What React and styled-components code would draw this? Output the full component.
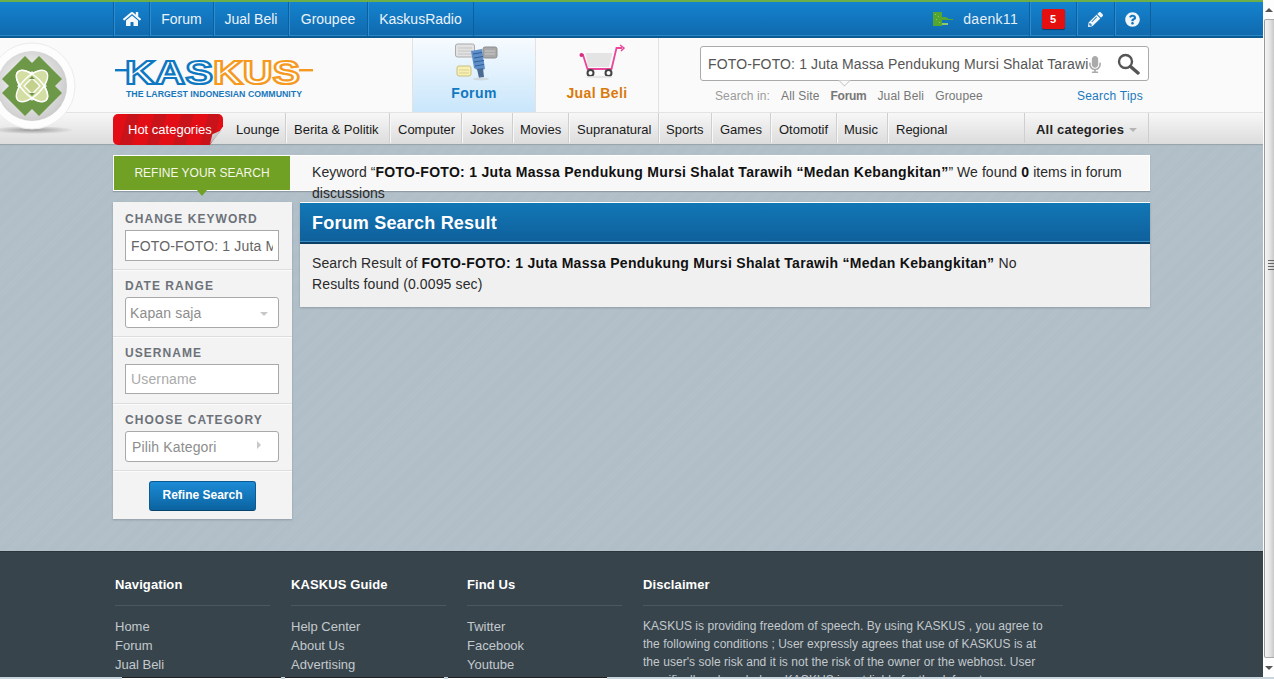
import React from "react";
import styled, { createGlobalStyle } from "styled-components";
import { FaHome, FaPencilAlt, FaQuestionCircle, FaMicrophone } from "react-icons/fa";

const Global = createGlobalStyle`
  html, body { margin: 0; padding: 0; height: 679px; overflow: hidden; }
  body { font-family: "Liberation Sans", Arial, sans-serif; background: #fff; }
  * { box-sizing: border-box; }
`;

const Frame = styled.div`
  width: 1274px; height: 679px; display: flex; flex-direction: column; overflow: hidden;
`;
const Window = styled.div`
  flex: 1; min-height: 0; display: flex;
`;
const Page = styled.div`
  position: relative; flex: 1; min-width: 0; height: 100%; overflow: hidden; display: flex; flex-direction: column;
`;
const Scrollbar = styled.div`
  width: 11px; flex: none; background: #fdfdfd; border-left: 1px solid #fff; display: flex; flex-direction: column; align-items: stretch;
  position: relative;
`;
const ArrowBtn = styled.div`
  height: 19px; display: flex; align-items: center; justify-content: center;
  &::before {
    content: ""; width: 0; height: 0; border-left: 4px solid transparent; border-right: 4px solid transparent;
    ${p => p.$down ? "border-top: 4px solid #555;" : "border-bottom: 4px solid #555;"}
  }
`;
const Thumb = styled.div`
  flex: 1; border-left: 1px solid #9a9a9a; border-top: 1px solid #aaa; border-bottom: 1px solid #aaa; border-radius: 2px 0 0 2px;
  background: linear-gradient(90deg, #f4f4f4 0%, #e8e8e8 45%, #c9c9c9 100%);
  display: flex; flex-direction: column; align-items: center; justify-content: center; gap: 2px; padding-left: 1px;
  padding-bottom: 148px;
`;
const Grip = styled.span`
  display: block; width: 7px; height: 1px; background: #666; margin-left: 2px;
`;
const TaskStrip = styled.div`
  height: 2px; flex: none; display: flex; background: #c9d6de; padding-left: 122px; gap: 4px;
`;
const TaskTab = styled.div`
  width: 159px; height: 2px; background: #fff; border-top: 1px solid #222;
`;

const GreenLine = styled.div`
  height: 2px; flex: none; background: #6cae48;
`;
const TopBar = styled.div`
  height: 36px; flex: none; background: linear-gradient(#1483cf, #1069ad); border-bottom: 2px solid #0c5a92; box-shadow: inset 0 -1px 0 #2a87c8;
  padding-left: 113px; display: flex;
`;
const TopInner = styled.div`
  width: 1038px; display: flex; justify-content: space-between; height: 34px;
`;
const TopGroup = styled.div`
  display: flex; height: 34px;
`;
const TopItem = styled.div`
  width: ${p => p.$w}px; height: 100%; border-left: 1px solid #0d5f9e; box-shadow: inset 1px 0 0 #2a8ed5;
  display: flex; align-items: center; justify-content: center; color: #eaf3fa; font-size: 14px;
  ${p => p.$end && "border-right: 1px solid #0d5f9e;"}
`;
const UserBlock = styled.div`
  display: flex; align-items: center; gap: 10px; color: #e4eff8; font-size: 14px; padding-right: 11px; letter-spacing: .3px;
`;
const Badge = styled.div`
  width: 23px; height: 20px; background: #e60f10; border-radius: 2px; box-shadow: 0 1px 1px #0a3d66; color: #fff; font-size: 11px; font-weight: bold;
  display: flex; align-items: center; justify-content: center;
`;

const Header = styled.div`
  height: 75px; flex: none; background: #fafafa; border-bottom: 1px solid #e3e3e3; padding-left: 113px; display: flex;
`;
const LogoBox = styled.div`
  width: 300px; flex: none; padding: 19px 0 0 2px; border-right: 1px solid #e2e2e2;
`;
const Tab = styled.div`
  width: ${p => p.$w}px; flex: none; height: 74px; display: flex; flex-direction: column; align-items: center; padding-top: 5px;
  border-right: 1px solid #e2e2e2; font-size: 14px; font-weight: bold; letter-spacing: .4px;
  color: ${p => p.$active ? "#1278bf" : "#d97a0c"};
  background: ${p => p.$active ? "linear-gradient(#f7fbff, #c9e6fb)" : "#fafafa"};
`;
const TabIcon = styled.svg`
  width: 50px; height: 38px; margin-bottom: 4px; display: block; overflow: visible;
`;
const SearchArea = styled.div`
  flex: none; width: 449px; margin-left: 41px; padding-top: 8px;
`;
const SearchBox = styled.div`
  position: relative; height: 35px; background: #fff; border: 1px solid #aaa; border-radius: 3px; display: flex; align-items: center; padding: 0 8px 0 7px;
  &::after {
    content: ""; position: absolute; left: 139px; bottom: -5px; width: 8px; height: 8px; background: #fafafa; border-right: 1px solid #bbb; border-bottom: 1px solid #bbb; transform: rotate(45deg);
    clip-path: polygon(100% 0, 100% 100%, 0 100%);
  }
`;
const SearchInput = styled.input`
  flex: none; width: 380px; border: 0; outline: 0; padding: 0; background: transparent; font: 14px "Liberation Sans", Arial, sans-serif; color: #555; letter-spacing: .13px;
`;
const MicWrap = styled.div`
  width: 14px; flex: none; color: #aaa; font-size: 17px; display: flex; justify-content: center; margin-top: 2px;
`;
const SearchIconWrap = styled.div`
  margin-left: auto; display: flex;
`;
const SearchMeta = styled.div`
  display: flex; align-items: center; height: 28px; padding: 0 6px 0 15px; font-size: 12px; color: #7c7c7c; margin-top: 1px;
`;
const MetaLabel = styled.span`
  color: #9a9a9a; margin-right: 11px; letter-spacing: .1px;
`;
const MetaItem = styled.span`
  margin-right: 11px; font-weight: ${p => p.$b ? "bold" : "normal"}; color: #777; letter-spacing: ${p => p.$b ? "-.3px" : ".15px"};
`;
const MetaLink = styled.span`
  margin-left: auto; color: #1b79bd; letter-spacing: .25px;
`;

const CatNav = styled.div`
  height: 31px; flex: none; background: linear-gradient(#f7f7f7, #dcdcdc); padding-left: 113px; display: flex;
  box-shadow: 0 1px 1px #9aa5ac; position: relative;
`;
const Hot = styled.div`
  width: 110px; height: 31px; margin-top: 1px; border-radius: 5px 5px 0 5px; color: #fff; font-size: 13px; display: flex; align-items: center; padding-left: 15px; flex: none;
  background: repeating-linear-gradient(105deg, #e30d15 0 14px, #c9131a 14px 26px);
  clip-path: polygon(0 0, 100% 0, 100% 40%, 88% 100%, 0 100%);
  position: relative; z-index: 2;
`;
const Curl = styled.div`
  width: 12px; height: 14px; margin: 17px 0 0 -13px; z-index: 3; flex: none; background: linear-gradient(135deg, #f2f2f2, #8c8c8c); clip-path: polygon(100% 0, 0 100%, 20% 30%);
`;
const CatItem = styled.div`
  width: ${p => p.$w}px; height: 30px; padding: 2px 0 0 ${p => p.$pad || 8}px; border-right: ${p => p.$plain ? "0" : "1px solid #cfcfcf"}; box-shadow: ${p => p.$plain ? "none" : "1px 0 0 #f8f8f8"}; display: flex; align-items: center; font-size: 13px; color: #1a1a1a; flex: none; white-space: nowrap;
`;
const AllCats = styled.div`
  margin-left: 76px; width: 125px; height: 30px; padding-top: 2px; border-left: 1px solid #cfcfcf; border-right: 1px solid #cfcfcf; display: flex; align-items: center; padding-left: 11px; gap: 5px; font-size: 13px; font-weight: bold; color: #222; flex: none; letter-spacing: .2px;
  &::after { content: ""; width: 0; height: 0; border-left: 4px solid transparent; border-right: 4px solid transparent; border-top: 4px solid #b5b5b5; margin-top: 1px; }
`;

const Body = styled.div`
  height: 407px; flex: none; padding: 11px 0 0 113px;
  background-color: #b1bfc8;
  background-image: repeating-linear-gradient(135deg, rgba(255,255,255,.035) 0 1px, rgba(0,0,0,.012) 1px 2px);
`;
const Container = styled.div`
  width: 1037px;
`;
const RefineBar = styled.div`
  position: relative; height: 36px; background: #f8f8f8; border: 1px solid #fff; box-shadow: 0 1px 1px #8f9ca5; display: flex; margin-bottom: 11px;
`;
const RefineLabel = styled.div`
  position: relative; width: 176px; flex: none; height: 34px; background: #70a024; color: #f4f7ea; font-size: 12px; display: flex; align-items: center; justify-content: center;
  &::after { content: ""; position: absolute; left: 83px; top: 34px; width: 0; height: 0; border-left: 5px solid transparent; border-right: 5px solid transparent; border-top: 6px solid #70a024; }
`;
const KeywordText = styled.div`
  width: 830px; margin-left: 22px; font-size: 14px; line-height: 21px; color: #2a2a2a; height: 42px; padding-top: 6px; flex: none; letter-spacing: .05px;
  b { color: #111; letter-spacing: .3px; }
`;
const Columns = styled.div`
  display: flex; align-items: flex-start; gap: 8px;
`;
const Sidebar = styled.div`
  width: 179px; flex: none; background: #f3f3f3; box-shadow: 0 1px 2px #8f9ca5;
`;
const Section = styled.div`
  height: ${p => p.$h || 67}px; padding: ${p => p.$top || 9}px 13px 0 12px; border-bottom: 1px solid #dedede; box-shadow: 0 1px 0 #fbfbfb;
`;
const Label = styled.div`
  font-size: 12px; font-weight: bold; letter-spacing: 1.05px; color: #6d727a; line-height: 14px; margin-bottom: 4px; white-space: nowrap;
`;
const TextField = styled.input`
  width: 154px; height: ${p => p.$h || 31}px; border: 1px solid #a9a9a9; border-radius: 0; padding: 0 5px; font: 14px "Liberation Sans", Arial, sans-serif; color: #666; background: #fff; outline: 0; letter-spacing: .15px;
  &::placeholder { color: #aaa; opacity: 1; }
`;
const SelectBox = styled.div`
  width: 154px; height: 31px; border: 1px solid #a9a9a9; border-radius: 3px; background: #fff; padding: 0 ${p => p.$side ? 17 : 10}px 0 ${p => p.$side ? 6 : 4}px; display: flex; align-items: center; justify-content: space-between; font-size: 14px; color: #8d8d8d; letter-spacing: .15px;
  &::after {
    content: ""; width: 0; height: 0;
    ${p => p.$side
      ? "border-top: 4px solid transparent; border-bottom: 4px solid transparent; border-left: 4px solid #c8c8c8; margin-top: -4px;"
      : "border-left: 4px solid transparent; border-right: 4px solid transparent; border-top: 4px solid #c8c8c8; margin-top: 3px;"}
  }
`;
const ButtonRow = styled.div`
  height: 48px; padding-top: 10px; display: flex; justify-content: center;
`;
const RefineBtn = styled.div`
  width: 107px; height: 30px; padding-bottom: 2px; border: 1px solid #0c5a92; border-bottom-color: #07436f; border-radius: 3px; background: linear-gradient(#1c8bd6, #0b639f); color: #fff; font-size: 12px; font-weight: bold; display: flex; align-items: center; justify-content: center;
`;
const Result = styled.div`
  width: 850px; flex: none; height: 105px; background: #f0f0f0; box-shadow: 0 1px 2px #8f9ca5; border-top: 1px solid #fff;
`;
const ResultHead = styled.div`
  height: 41px; padding: 2px 0 0 12px; background: linear-gradient(#1277b6, #0f609b); border-bottom: 2px solid #0b3f66; box-shadow: inset 0 -1px 0 #3b8ec5; color: #fff; font-size: 18px; font-weight: bold; letter-spacing: .2px; display: flex; align-items: center;
`;
const ResultBody = styled.div`
  width: 730px; padding: 9px 0 0 12px; font-size: 14px; line-height: 21px; color: #2a2a2a; letter-spacing: .12px;
  b { color: #111; letter-spacing: .3px; }
`;

const Footer = styled.div`
  flex: 1; min-height: 0; overflow: hidden; background: #37444c; border-top: 1px solid #2b353b; padding: 23px 0 0 115px; display: flex; gap: 21px;
`;
const FootCol = styled.div`
  width: ${p => p.$w || 155}px; flex: none;
`;
const FootTitle = styled.div`
  height: 31px; border-bottom: 1px solid #4a5961; font-size: 13px; font-weight: bold; color: #fff; line-height: 20px; margin-bottom: 11px; letter-spacing: .1px;
`;
const FootLink = styled.div`
  font-size: 13px; line-height: 19px; color: #c3c9cd;
`;
const Disclaimer = styled.div`
  font-size: 12px; line-height: 18px; color: #c3c9cd; width: 405px; letter-spacing: .04px;
`;

const RoundLogo = styled.svg`
  position: absolute; left: -14px; top: 42px; width: 96px; height: 104px; z-index: 5;
`;

function KaskusLogo() {
  const font = '"Liberation Sans", Arial, sans-serif';
  return (
    <svg width="198" height="44" viewBox="0 0 198 44" style={{ display: "block" }}>
      <rect x="0" y="12" width="12" height="2.4" fill="#0f78c2" />
      <rect x="184" y="12" width="14" height="2.4" fill="#f59a1f" />
      <text x="10" y="27" fontFamily={font} fontWeight="bold" fontSize="34" fill="#fff" stroke="#0f78c2" strokeWidth="2.2" textLength="88" lengthAdjust="spacingAndGlyphs">KAS</text>
      <text x="98" y="27" fontFamily={font} fontWeight="bold" fontSize="34" fill="#fff" stroke="#f59a1f" strokeWidth="2.2" textLength="87" lengthAdjust="spacingAndGlyphs">KUS</text>
      <text x="11" y="40" fontFamily={font} fontWeight="bold" fontSize="9" fill="#1878bd" textLength="176" lengthAdjust="spacingAndGlyphs">THE LARGEST INDONESIAN COMMUNITY</text>
    </svg>
  );
}

function ForumIcon() {
  return (
    <TabIcon viewBox="0 0 50 38">
      <rect x="6.5" y="1" width="19" height="13" rx="2" fill="#e2e2e2" stroke="#aaa" />
      <path d="M9 5h14M9 8h14M9 11h14" stroke="#c4c4c4" />
      <rect x="34" y="4" width="14" height="11" rx="2" fill="#a9a9a9" stroke="#8d8d8d" />
      <path d="M36 8h10M36 11h10" stroke="#c9c9c9" />
      <rect x="8" y="23" width="14" height="10" rx="2" fill="#f7f0b5" stroke="#c9bf7d" />
      <path d="M10 27h10M10 30h10" stroke="#d9cf8d" />
      <path d="M22 8l11-2 3 20-6 2-5-3z" fill="#5e8fc8" />
      <path d="M24 11l9-1.500M25 15l9-1.500M25 19l10-1.500M26 23l9-1.500" stroke="#2f5f9c" />
      <path d="M28 26l6-1 1 9-5 1z" fill="#4a6a94" />
      <ellipse cx="32" cy="36" rx="8" ry="1.4" fill="#cfd9e0" />
    </TabIcon>
  );
}

function CartIcon() {
  return (
    <TabIcon viewBox="0 0 50 38">
      <path d="M13.500 10H40.500L37 24H16z" fill="#e4e4e4" />
      <path d="M9.500 12L11 12 15.500 26H39.500L44.500 5 50 5" fill="none" stroke="#e8479b" strokeWidth="1.8" />
      <path d="M48 2l4 3-3 3" fill="none" stroke="#e8479b" strokeWidth="1.5" />
      <circle cx="9.500" cy="12" r="2" fill="#d92c7f" />
      <circle cx="18.500" cy="30" r="3" fill="#fff" stroke="#444" strokeWidth="2" />
      <circle cx="36.500" cy="30" r="3" fill="#fff" stroke="#444" strokeWidth="2" />
      <ellipse cx="27" cy="34" rx="14" ry="1.2" fill="#e6e6e6" />
    </TabIcon>
  );
}

function UserRank() {
  return (
    <svg width="20" height="15" viewBox="0 0 20 15">
      <path d="M0 0h9v5h4l3 2h4v1h-11v6H0z" fill="#55a630" />
      <path d="M9 11h6v2H9z" fill="#8fc96d" />
      <path d="M2 2h1v1H2zM5 4h1v1H5zM3 7h1v1H3zM6 10h1v1H6z" fill="#8fc96d" />
    </svg>
  );
}

function Magnifier() {
  return (
    <svg width="24" height="24" viewBox="0 0 24 24">
      <circle cx="9.500" cy="9.500" r="6.500" fill="none" stroke="#555" strokeWidth="2.4" />
      <path d="M14.500 14.500L22 21" stroke="#555" strokeWidth="3.4" strokeLinecap="round" />
    </svg>
  );
}

const KEYWORD = "FOTO-FOTO: 1 Juta Massa Pendukung Mursi Shalat Tarawih “Medan Kebangkitan”";
const CATS = [
  ["Lounge", 64, 14], ["Berita & Politik", 104], ["Computer", 72], ["Jokes", 51], ["Movies", 56, 7], ["Supranatural", 90],
  ["Sports", 53, 7], ["Games", 59], ["Otomotif", 66], ["Music", 51, 7],
];

export default function App() {
  return (
    <Frame>
      <Global />
      <Window>
        <Page>
          <GreenLine />
          <TopBar>
            <TopInner>
              <TopGroup>
                <TopItem $w={36}><FaHome size={18} color="#f4f8fb" /></TopItem>
                <TopItem $w={64}>Forum</TopItem>
                <TopItem $w={75}>Jual Beli</TopItem>
                <TopItem $w={79}>Groupee</TopItem>
                <TopItem $w={107} $end>KaskusRadio</TopItem>
              </TopGroup>
              <TopGroup>
                <UserBlock><UserRank />daenk11</UserBlock>
                <TopItem $w={47}><Badge>5</Badge></TopItem>
                <TopItem $w={38}><FaPencilAlt size={15} color="#f2f6fa" /></TopItem>
                <TopItem $w={37} $end><FaQuestionCircle size={15} color="#f2f6fa" /></TopItem>
              </TopGroup>
            </TopInner>
          </TopBar>
          <Header>
            <LogoBox><KaskusLogo /></LogoBox>
            <Tab $w={123} $active><ForumIcon />Forum</Tab>
            <Tab $w={123}><CartIcon />Jual Beli</Tab>
            <SearchArea>
              <SearchBox>
                <SearchInput readOnly value={KEYWORD} />
                <MicWrap><FaMicrophone /></MicWrap>
                <SearchIconWrap><Magnifier /></SearchIconWrap>
              </SearchBox>
              <SearchMeta>
                <MetaLabel>Search in:</MetaLabel>
                <MetaItem>All Site</MetaItem>
                <MetaItem $b>Forum</MetaItem>
                <MetaItem>Jual Beli</MetaItem>
                <MetaItem>Groupee</MetaItem>
                <MetaLink>Search Tips</MetaLink>
              </SearchMeta>
            </SearchArea>
          </Header>
          <CatNav>
            <Hot>Hot categories</Hot>
            <Curl />
            {CATS.map(([c, w, pad]) => <CatItem key={c} $w={w} $pad={pad}>{c}</CatItem>)}
            <CatItem $w={60} $plain>Regional</CatItem>
            <AllCats>All categories</AllCats>
          </CatNav>
          <Body>
            <Container>
              <RefineBar>
                <RefineLabel>REFINE YOUR SEARCH</RefineLabel>
                <KeywordText>Keyword “<b>{KEYWORD}</b>” We found <b>0</b> items in forum discussions</KeywordText>
              </RefineBar>
              <Columns>
                <Sidebar>
                  <Section $h={68} $top={10}>
                    <Label>CHANGE KEYWORD</Label>
                    <TextField readOnly value={KEYWORD} />
                  </Section>
                  <Section>
                    <Label>DATE RANGE</Label>
                    <SelectBox>Kapan saja</SelectBox>
                  </Section>
                  <Section>
                    <Label>USERNAME</Label>
                    <TextField $h={30} placeholder="Username" />
                  </Section>
                  <Section>
                    <Label>CHOOSE CATEGORY</Label>
                    <SelectBox $side>Pilih Kategori</SelectBox>
                  </Section>
                  <ButtonRow><RefineBtn>Refine Search</RefineBtn></ButtonRow>
                </Sidebar>
                <Result>
                  <ResultHead>Forum Search Result</ResultHead>
                  <ResultBody>Search Result of <b>{KEYWORD}</b> No Results found (0.0095 sec)</ResultBody>
                </Result>
              </Columns>
            </Container>
          </Body>
          <Footer>
            <FootCol>
              <FootTitle>Navigation</FootTitle>
              <FootLink>Home</FootLink><FootLink>Forum</FootLink><FootLink>Jual Beli</FootLink>
            </FootCol>
            <FootCol>
              <FootTitle>KASKUS Guide</FootTitle>
              <FootLink>Help Center</FootLink><FootLink>About Us</FootLink><FootLink>Advertising</FootLink>
            </FootCol>
            <FootCol>
              <FootTitle>Find Us</FootTitle>
              <FootLink>Twitter</FootLink><FootLink>Facebook</FootLink><FootLink>Youtube</FootLink>
            </FootCol>
            <FootCol $w={420}>
              <FootTitle>Disclaimer</FootTitle>
              <Disclaimer>KASKUS is providing freedom of speech. By using KASKUS , you agree to the following conditions ; User expressly agrees that use of KASKUS is at the user's sole risk and it is not the risk of the owner or the webhost. User specifically acknowledges KASKUS is not liable for the defamatory, offensive or illegal conduct of other user or third-parties.</Disclaimer>
            </FootCol>
          </Footer>
          <RoundLogo viewBox="-46 -44 96 104">
            <defs>
              <radialGradient id="disc" cx="45%" cy="45%" r="60%">
                <stop offset="0%" stopColor="#fff" />
                <stop offset="100%" stopColor="#c9c9c9" />
              </radialGradient>
              <radialGradient id="sh" cx="50%" cy="50%" r="50%">
                <stop offset="0%" stopColor="#9a9a9a" />
                <stop offset="100%" stopColor="#9a9a9a" stopOpacity="0" />
              </radialGradient>
            </defs>
            <ellipse cx="0" cy="44" rx="42" ry="4" fill="url(#sh)" />
            <circle r="43" fill="#fdfdfd" stroke="#ececec" />
            <circle r="35" fill="url(#disc)" />
            <polygon points="-30,-7 -7,-30 4,-19 -19,4" fill="#6d9848" />
            <polygon points="30,-7 7,-30 -4,-19 19,4" fill="#6d9848" />
            <polygon points="-30,7 -7,30 4,19 -19,-4" fill="#6d9848" />
            <polygon points="30,7 7,30 -4,19 19,-4" fill="#6d9848" />
            <g stroke="#fff" strokeWidth="1.4" fill="#d3dea3">
              <ellipse rx="20" ry="9.500" transform="rotate(45)" />
              <ellipse rx="20" ry="9.500" transform="rotate(-45)" />
            </g>
            <g stroke="#fff" strokeWidth="1.3" fill="none">
              <ellipse rx="20" ry="9.500" transform="rotate(45)" />
            </g>
            <polygon points="0,-8 8,0 0,8 -8,0" fill="#c3d18d" stroke="#fff" strokeWidth="1.3" />
            <path d="M-3 -7l3-3 3 3M-3 7l3 3 3-3" fill="#6d9848" />
          </RoundLogo>
        </Page>
        <Scrollbar>
          <ArrowBtn />
          <Thumb><Grip /><Grip /><Grip /><Grip /></Thumb>
          <ArrowBtn $down />
        </Scrollbar>
      </Window>
      <TaskStrip><TaskTab /><TaskTab /><TaskTab /></TaskStrip>
    </Frame>
  );
}
